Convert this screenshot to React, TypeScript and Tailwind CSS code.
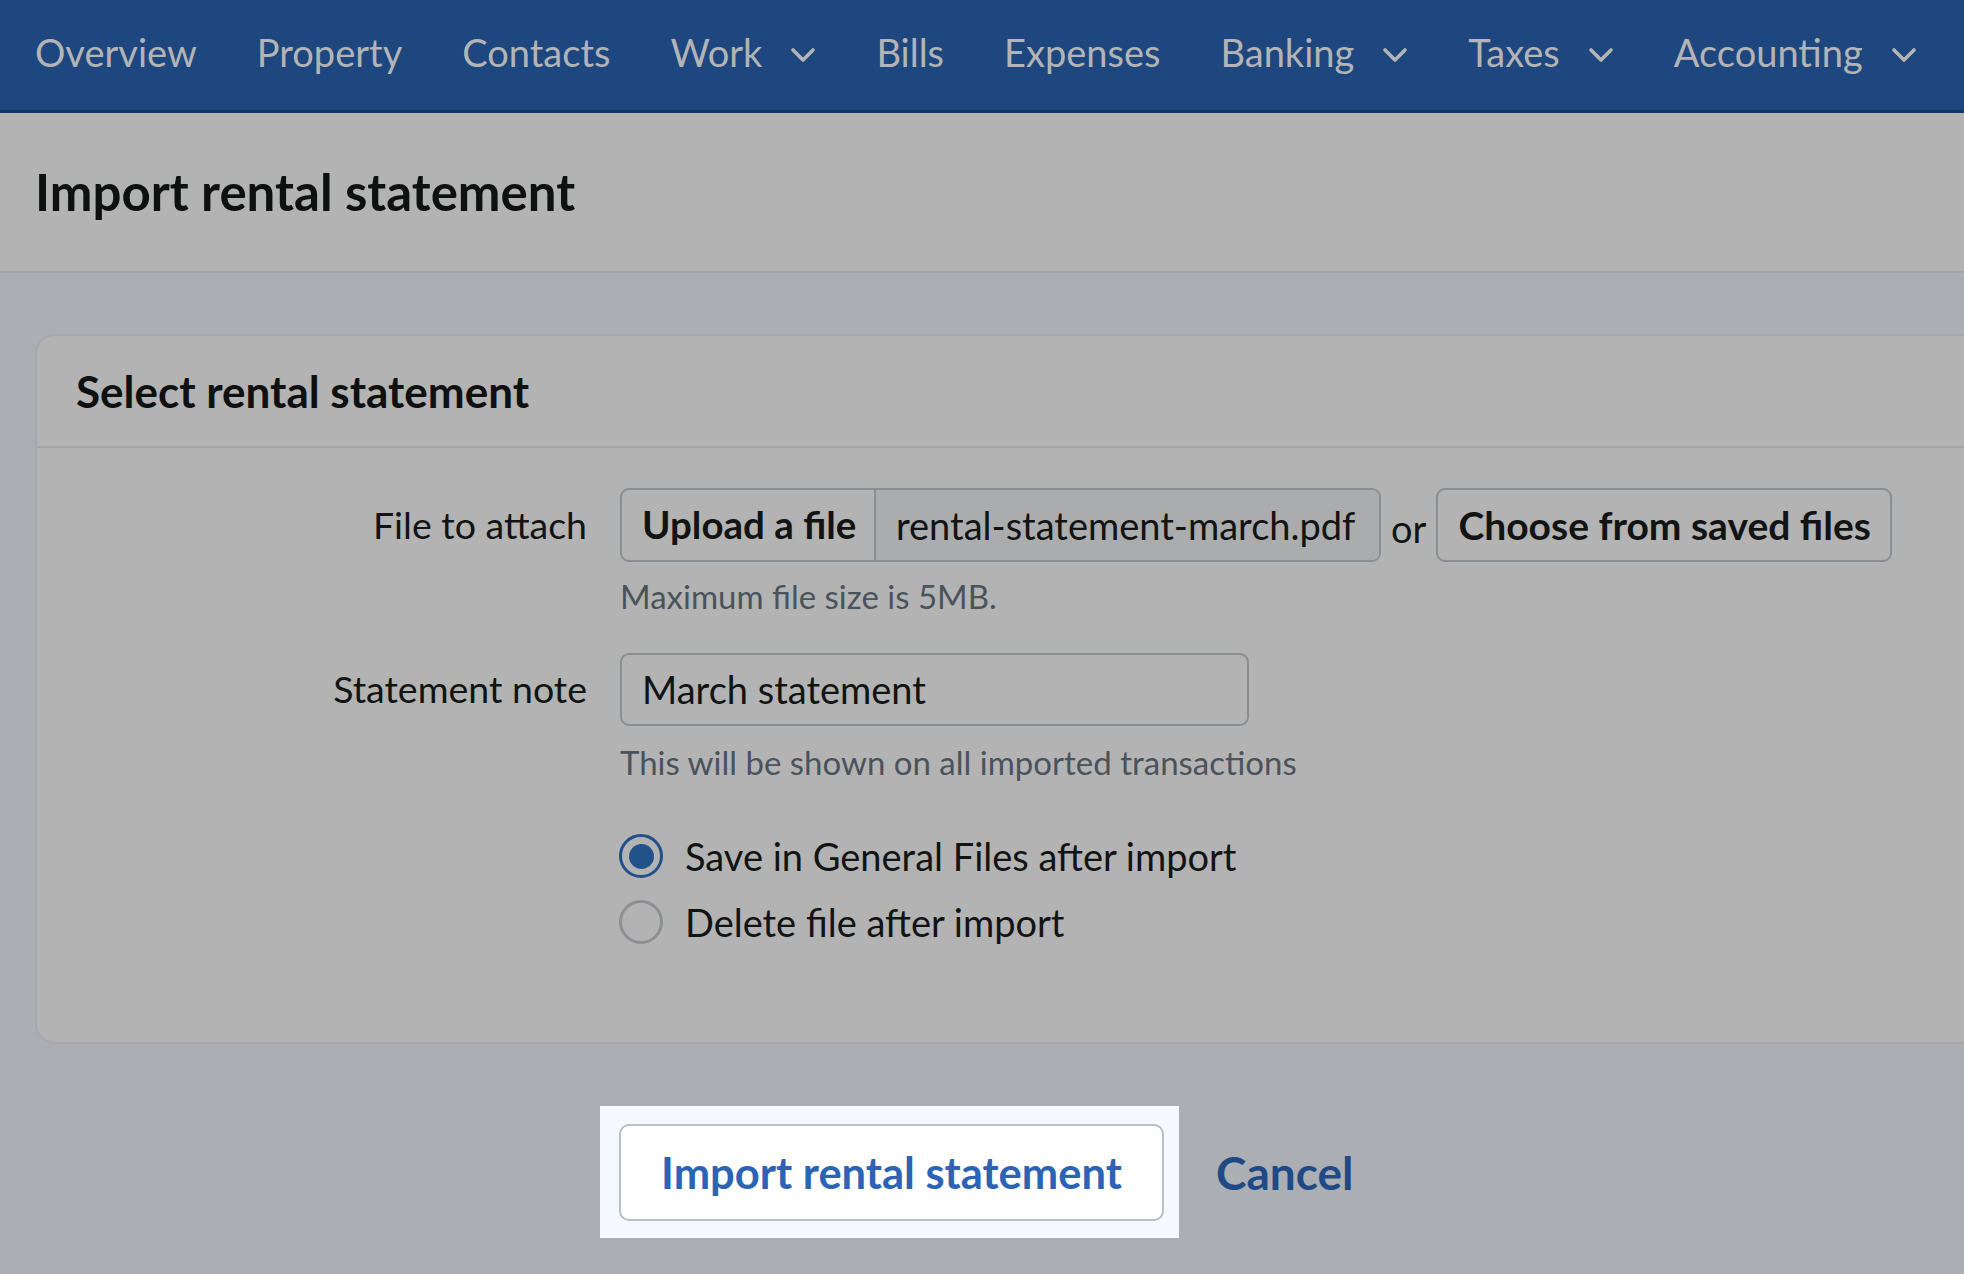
import { ReactNode } from 'react';

const navItems: { label: string; menu?: boolean }[] = [
  { label: 'Overview' },
  { label: 'Property' },
  { label: 'Contacts' },
  { label: 'Work', menu: true },
  { label: 'Bills' },
  { label: 'Expenses' },
  { label: 'Banking', menu: true },
  { label: 'Taxes', menu: true },
  { label: 'Accounting', menu: true },
];

function Chevron() {
  return (
    <svg width="26" height="16" viewBox="0 0 26 16" className="ml-[28px] mt-[4px]">
      <polyline points="3,3 13,13 23,3" fill="none" stroke="currentColor" strokeWidth="3.6" strokeLinecap="round" strokeLinejoin="round" />
    </svg>
  );
}

function Row({ label, children }: { label: string; children: ReactNode }) {
  return (
    <div className="flex items-center">
      <div className="w-[550px] shrink-0 text-right text-[37.5px] text-[#121313]">{label}</div>
      <div className="ml-[33px] flex items-center">{children}</div>
    </div>
  );
}

function Radio({ checked, label }: { checked?: boolean; label: string }) {
  return (
    <div className="flex items-center h-[44px]">
      <span
        className={`w-[44px] h-[44px] rounded-full border-[3px] flex items-center justify-center ${
          checked ? 'border-[#22508b]' : 'border-[#8c8f94]'
        }`}
      >
        {checked && <span className="w-[25px] h-[25px] rounded-full bg-[#22528a]" />}
      </span>
      <span className="ml-[22px] text-[38px] text-[#121313]">{label}</span>
    </div>
  );
}

export default function App() {
  return (
    <div className="min-h-screen bg-[#abaeb2] font-['Lato',sans-serif] overflow-hidden">
      {/* Navbar */}
      <nav className="h-[113px] bg-[#1f477f] border-b-[3px] border-[#163865] flex items-center pl-[35px] pb-[5px] gap-[60px] text-[38px] text-[#b3b4b6]">
        {navItems.map((item) => (
          <div key={item.label} className="flex items-center">
            <span>{item.label}</span>
            {item.menu && <Chevron />}
          </div>
        ))}
      </nav>

      {/* Page header */}
      <header className="h-[160px] bg-[#b3b3b3] border-b-2 border-[#a3a4a7] flex items-center px-[35px]">
        <h1 className="text-[51px] font-bold text-[#0f1010]">Import rental statement</h1>
      </header>

      <main className="pl-[35px] pt-[61px]">
        <section className="-mr-[40px] bg-[#b3b3b3] border-2 border-[#a6a8ab] rounded-l-[20px]">
          <div className="h-[112px] flex items-center pl-[39px] border-b-2 border-[#a3a5a9]">
            <h2 className="text-[44px] font-bold text-[#0f1010]">Select rental statement</h2>
          </div>

          <div className="pt-[40px] pb-[98px]">
            <Row label="File to attach">
              <div className="flex h-[74px] border-2 border-[#8a8e93] rounded-[9px] overflow-hidden">
                <div className="w-[254px] flex items-center pl-[20px] text-[38.5px] font-bold text-[#121313] border-r-2 border-[#8a8e93]">
                  Upload a file
                </div>
                <div className="w-[503px] flex items-center pl-[20px] bg-[#abacae] text-[38px] text-[#121313]">
                  rental-statement-march.pdf
                </div>
              </div>
              <span className="ml-[10px] mt-[6px] text-[38px] text-[#121313]">or</span>
              <div className="ml-[10px] w-[456px] h-[74px] flex items-center pl-[20px] border-2 border-[#8a8e93] rounded-[9px] text-[39px] font-bold text-[#121313]">
                Choose from saved files
              </div>
            </Row>
            <div className="ml-[583px] mt-[10px] text-[33px] text-[#4a535c]">Maximum file size is 5MB.</div>

            <div className="mt-[31px]">
              <Row label="Statement note">
                <div className="w-[629px] h-[73px] flex items-center pl-[20px] border-2 border-[#8a8e93] rounded-[9px] text-[38px] text-[#121313]">
                  March statement
                </div>
              </Row>
            </div>
            <div className="ml-[583px] mt-[12px] text-[33px] text-[#4a535c]">
              This will be shown on all imported transactions
            </div>

            <div className="ml-[582px] mt-[47px] flex flex-col gap-[22px]">
              <Radio checked label="Save in General Files after import" />
              <Radio label="Delete file after import" />
            </div>
          </div>
        </section>

        {/* Actions */}
        <div className="pl-[565px] pt-[62px] flex items-center">
          <div className="bg-[#f5f8fd] pt-[18px] pb-[17px] pl-[19px] pr-[15px]">
            <button className="w-[545px] h-[97px] bg-white border-2 border-[#b9bdc5] rounded-[10px] text-[43.5px] font-bold text-[#2c63b5]">
              Import rental statement
            </button>
          </div>
          <a className="ml-[37px] text-[46px] font-bold text-[#1f4a85]">Cancel</a>
        </div>
      </main>
    </div>
  );
}
